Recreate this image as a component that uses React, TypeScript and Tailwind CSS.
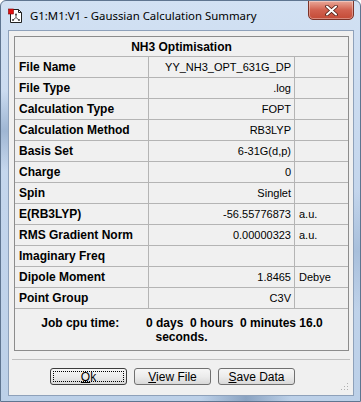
import React from "react";

const rows: [string, string, string][] = [
  ["File Name", "YY_NH3_OPT_631G_DP", ""],
  ["File Type", ".log", ""],
  ["Calculation Type", "FOPT", ""],
  ["Calculation Method", "RB3LYP", ""],
  ["Basis Set", "6-31G(d,p)", ""],
  ["Charge", "0", ""],
  ["Spin", "Singlet", ""],
  ["E(RB3LYP)", "-56.55776873", "a.u."],
  ["RMS Gradient Norm", "0.00000323", "a.u."],
  ["Imaginary Freq", "", ""],
  ["Dipole Moment", "1.8465", "Debye"],
  ["Point Group", "C3V", ""],
];

function TitleIcon() {
  return (
    <svg width="16" height="16" viewBox="0 0 16 16">
      <path d="M2.5 1.5 H10.5 L13.5 4.5 V14.5 H2.5 Z" fill="#fff" stroke="#222" strokeWidth="1" />
      <path d="M10.5 1.5 V4.5 H13.5" fill="none" stroke="#222" strokeWidth="1" />
      <rect x="0.5" y="1" width="5" height="5" fill="#e01010" stroke="#800" strokeWidth="0.6" />
      <path d="M8 6.5 V9.5 L5 12 M8 9.5 L11 12" fill="none" stroke="#555" strokeWidth="1" />
      <circle cx="8" cy="6.5" r="1" fill="#444" />
      <circle cx="5" cy="12" r="1" fill="#444" />
      <circle cx="11" cy="12" r="1" fill="#444" />
    </svg>
  );
}

function Btn({ first, rest, focused }: { first: string; rest: string; focused?: boolean }) {
  return (
    <button
      className={
        "relative w-[77px] h-[17px] rounded-[3px] border text-[12px] leading-none text-black flex items-center justify-center bg-gradient-to-b from-[#f6f6f6] via-[#ececec] to-[#d9d9d9] " +
        (focused ? "border-[#3c3c3c]" : "border-[#707070]")
      }
      style={{ fontFamily: '"Liberation Sans", Arial, sans-serif' }}
    >
      {focused && (
        <span className="absolute inset-[2px] border border-dotted border-black" />
      )}
      <span>
        <span className="underline">{first}</span>
        {rest}
      </span>
    </button>
  );
}

export default function App() {
  return (
    <div
      className="w-[361px] h-[402px] relative overflow-hidden rounded-t-[6px] border border-[#5f7590] bg-gradient-to-b from-[#d2e1f3] via-[#c3d5ec] to-[#bcd0e8]"
      style={{ fontFamily: '"Liberation Sans", Arial, sans-serif' }}
    >
      {/* frame shading */}
      <div className="absolute left-0 top-[90px] w-[7px] h-[80px] bg-gradient-to-b from-transparent via-[#9fb6d3] to-transparent" />
      <div className="absolute right-0 top-[190px] w-[7px] h-[120px] bg-gradient-to-b from-transparent via-[#a8bfdb] to-transparent" />
      <div className="absolute bottom-0 left-[200px] w-[90px] h-[6px] bg-gradient-to-r from-transparent via-[#8aa3c2] to-transparent" />

      {/* title bar */}
      <div className="h-[29px] flex items-center pl-[7px] relative">
        <TitleIcon />
        <span
          className="ml-[6px] text-[11.4px] text-black"
          style={{ fontFamily: '"Noto Sans", "Open Sans", sans-serif' }}
        >
          G1:M1:V1 - Gaussian Calculation Summary
        </span>
        <div className="absolute right-[6px] top-[-1px] w-[46px] h-[20px] rounded-b-[5px] border border-[#7c3328] bg-gradient-to-b from-[#e9a899] via-[#d1614f] to-[#c44a36] flex items-center justify-center shadow-[inset_0_0_0_1px_rgba(255,255,255,0.35)]">
          <svg width="13" height="11" viewBox="0 0 13 11">
            <path d="M2 1.5 L11 9.5 M11 1.5 L2 9.5" stroke="#4a1a12" strokeWidth="3.6" strokeLinecap="round" />
            <path d="M2 1.5 L11 9.5 M11 1.5 L2 9.5" stroke="#ffffff" strokeWidth="2" strokeLinecap="round" />
          </svg>
        </div>
      </div>

      {/* client area */}
      <div className="absolute left-[7px] top-[29px] w-[346px] h-[366px] border border-[#8ea1ba] bg-[#f0f0f0]">
        <div className="pt-[5px] pl-[5px]">
          <div className="w-[335px] border border-[#8c8c8c] bg-[#f0f0f0]">
            <div className="h-[20px] flex items-center justify-center font-bold text-[12px] text-black border-b border-[#b4b4b4]">
              NH3 Optimisation
            </div>
            {rows.map(([label, value, unit], i) => (
              <div key={i} className="h-[21px] flex border-b border-[#b4b4b4]">
                <div className="w-[134px] border-r border-[#b4b4b4] flex items-center pl-[4px] font-bold text-[12px] text-black whitespace-nowrap">
                  {label}
                </div>
                <div className="w-[146px] border-r border-[#b4b4b4] flex items-center justify-end pr-[3px] text-[11px] text-black whitespace-nowrap">
                  {value}
                </div>
                <div className="flex-1 flex items-center pl-[4px] text-[11px] text-black whitespace-nowrap">
                  {unit}
                </div>
              </div>
            ))}
            <div className="h-[41px] flex flex-col items-center justify-center font-bold text-[12px] text-black leading-[14px]">
              <div className="whitespace-pre pl-[1px]">Job cpu time:{"        "}0 days  0 hours  0 minutes 16.0</div>
              <div>seconds.</div>
            </div>
          </div>
        </div>
        <div className="mt-[8px] mx-[3px] border-t border-[#c0c0c0]" />
        <div className="mt-[8px] flex gap-[7px] pl-[41px]">
          <Btn first="O" rest="k" focused />
          <Btn first="V" rest="iew File" />
          <Btn first="S" rest="ave Data" />
        </div>
        {/* size grip */}
        <svg className="absolute right-[3px] bottom-[3px]" width="10" height="10" viewBox="0 0 10 10">
          <rect x="7" y="1" width="1" height="1" fill="#b0b0b0" />
          <rect x="4" y="4" width="1" height="1" fill="#b0b0b0" />
          <rect x="7" y="4" width="1" height="1" fill="#b0b0b0" />
          <rect x="1" y="7" width="1" height="1" fill="#b0b0b0" />
          <rect x="4" y="7" width="1" height="1" fill="#b0b0b0" />
          <rect x="7" y="7" width="1" height="1" fill="#b0b0b0" />
        </svg>
      </div>
    </div>
  );
}
